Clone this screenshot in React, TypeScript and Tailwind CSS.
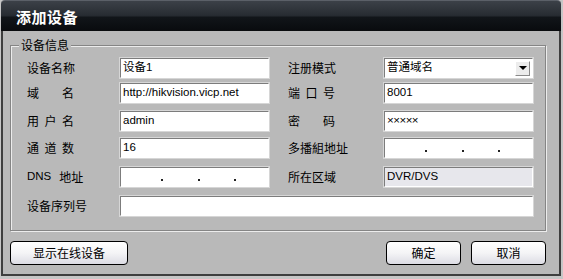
import React from "react";

// Sunken edit box used by every field on the form
const fieldCls =
  "h-[20px] border border-t-[#7c7c7c] border-l-[#7c7c7c] border-b-white border-r-white shadow-[0_0_0_1px_#d6d6d6] flex items-center pl-[2px] text-[11.5px] leading-none text-black font-['Liberation_Sans','Noto_Sans_CJK_SC',sans-serif] overflow-hidden whitespace-nowrap";

// Label whose characters are spread over the width of four characters
const Label: React.FC<{ text: string; spread?: boolean }> = ({ text, spread }) =>
  spread ? (
    <div className="w-[47px] flex justify-between text-[12px] leading-none whitespace-nowrap">
      {text.split("").map((c, i) => (
        <span key={i}>{c}</span>
      ))}
    </div>
  ) : (
    <div className="text-[12px] leading-none whitespace-nowrap">{text}</div>
  );

// IPv4 style box with the three separator dots
const IpField: React.FC<{ w: string }> = ({ w }) => (
  <div className={`${fieldCls} ${w} bg-white pl-0`}>
    {[0, 1, 2, 3].map((i) => (
      <div key={i} className="flex-1 h-full flex items-end pb-[5px] pl-[2px]">
        {i > 0 && <div className="w-[2px] h-[2px] bg-[#222]" />}
      </div>
    ))}
  </div>
);

export default function App() {
  return (
    <div className="w-[563px] h-[279px] bg-[#c6c6c6] overflow-hidden font-['Noto_Sans_CJK_SC',sans-serif] text-black">
      <div className="ml-px w-[560px] flex flex-col">
        {/* title bar */}
        <div className="h-[31px] rounded-t-[4px] border-t border-[#5b6068] bg-[linear-gradient(#3c4148,#272c32_48%,#111519_55%,#090b0e)] flex items-center pl-[15px]">
          <span className="text-white font-bold text-[15px] leading-none tracking-[0.5px]">添加设备</span>
        </div>

        {/* dialog body */}
        <div className="h-[245px] bg-[#b9b9b9] border-x-2 border-b-2 border-[#3e3e3e] flex flex-col">
          {/* group box */}
          <div className="relative ml-[7px] mt-[14px] w-[536px] h-[186px] border border-[#858585] shadow-[inset_1px_1px_0_#ececec,1px_1px_0_#ececec] pl-[16px] pt-[12px]">
            <span className="absolute -top-[8px] left-[8px] bg-[#b9b9b9] px-[2px] text-[12px] leading-[14px]">设备信息</span>

            {/* row 1 */}
            <div className="flex items-center">
              <div className="w-[93px]"><Label text="设备名称" /></div>
              <div className={`${fieldCls} w-[149px] bg-white`}>设备1</div>
              <div className="ml-[19px] w-[96px]"><Label text="注册模式" /></div>
              <div className={`${fieldCls} w-[149px] bg-white pr-[2px]`}>
                <span className="flex-1">普通域名</span>
                <div className="w-[15px] h-[15px] bg-[#ececec] border border-t-white border-l-white border-b-[#8a8a8a] border-r-[#8a8a8a] flex items-center justify-center">
                  <div className="w-0 h-0 border-x-[4px] border-x-transparent border-t-[4px] border-t-black" />
                </div>
              </div>
            </div>

            {/* row 2 */}
            <div className="flex items-center mt-[5px]">
              <div className="w-[93px]"><Label text="域名" spread /></div>
              <div className={`${fieldCls} w-[149px] bg-white`}>http://hikvision.vicp.net</div>
              <div className="ml-[19px] w-[96px]"><Label text="端口号" spread /></div>
              <div className={`${fieldCls} w-[149px] bg-white`}>8001</div>
            </div>

            {/* row 3 */}
            <div className="flex items-center mt-[8px]">
              <div className="w-[93px]"><Label text="用户名" spread /></div>
              <div className={`${fieldCls} w-[149px] bg-white`}>admin</div>
              <div className="ml-[19px] w-[96px]"><Label text="密码" spread /></div>
              <div className={`${fieldCls} w-[149px] bg-white items-start pt-[3px] text-[8px] tracking-[-0.5px]`}>×××××</div>
            </div>

            {/* row 4 */}
            <div className="flex items-center mt-[7px]">
              <div className="w-[93px]"><Label text="通道数" spread /></div>
              <div className={`${fieldCls} w-[149px] bg-white`}>16</div>
              <div className="ml-[19px] w-[96px]"><Label text="多播組地址" /></div>
              <IpField w="w-[149px]" />
            </div>

            {/* row 5 */}
            <div className="flex items-center mt-[9px]">
              <div className="w-[93px] flex items-center text-[12px] leading-none whitespace-nowrap">
                <span className="font-['Liberation_Sans',sans-serif] text-[11.5px]">DNS</span>
                <span className="ml-[8px]">地址</span>
              </div>
              <IpField w="w-[149px]" />
              <div className="ml-[19px] w-[96px]"><Label text="所在区域" /></div>
              <div className={`${fieldCls} w-[149px] bg-[#e7e7ec]`}>DVR/DVS</div>
            </div>

            {/* row 6 */}
            <div className="flex items-center mt-[9px]">
              <div className="w-[93px]"><Label text="设备序列号" /></div>
              <div className={`${fieldCls} w-[413px] bg-white`} />
            </div>
          </div>

          {/* buttons */}
          <div className="flex items-center ml-[7px] w-[536px] mt-[10px] text-[12px] leading-none">
            <button className="w-[118px] h-[24px] rounded-[4px] border border-black bg-[linear-gradient(#ffffff,#f4f4f6_50%,#dcdce4)]">
              显示在线设备
            </button>
            <button className="ml-auto w-[75px] h-[24px] rounded-[4px] border border-black bg-[linear-gradient(#ffffff,#f4f4f6_50%,#dcdce4)]">
              确定
            </button>
            <button className="ml-[10px] w-[75px] h-[24px] rounded-[4px] border border-black bg-[linear-gradient(#ffffff,#f4f4f6_50%,#dcdce4)]">
              取消
            </button>
          </div>
        </div>
      </div>
    </div>
  );
}
